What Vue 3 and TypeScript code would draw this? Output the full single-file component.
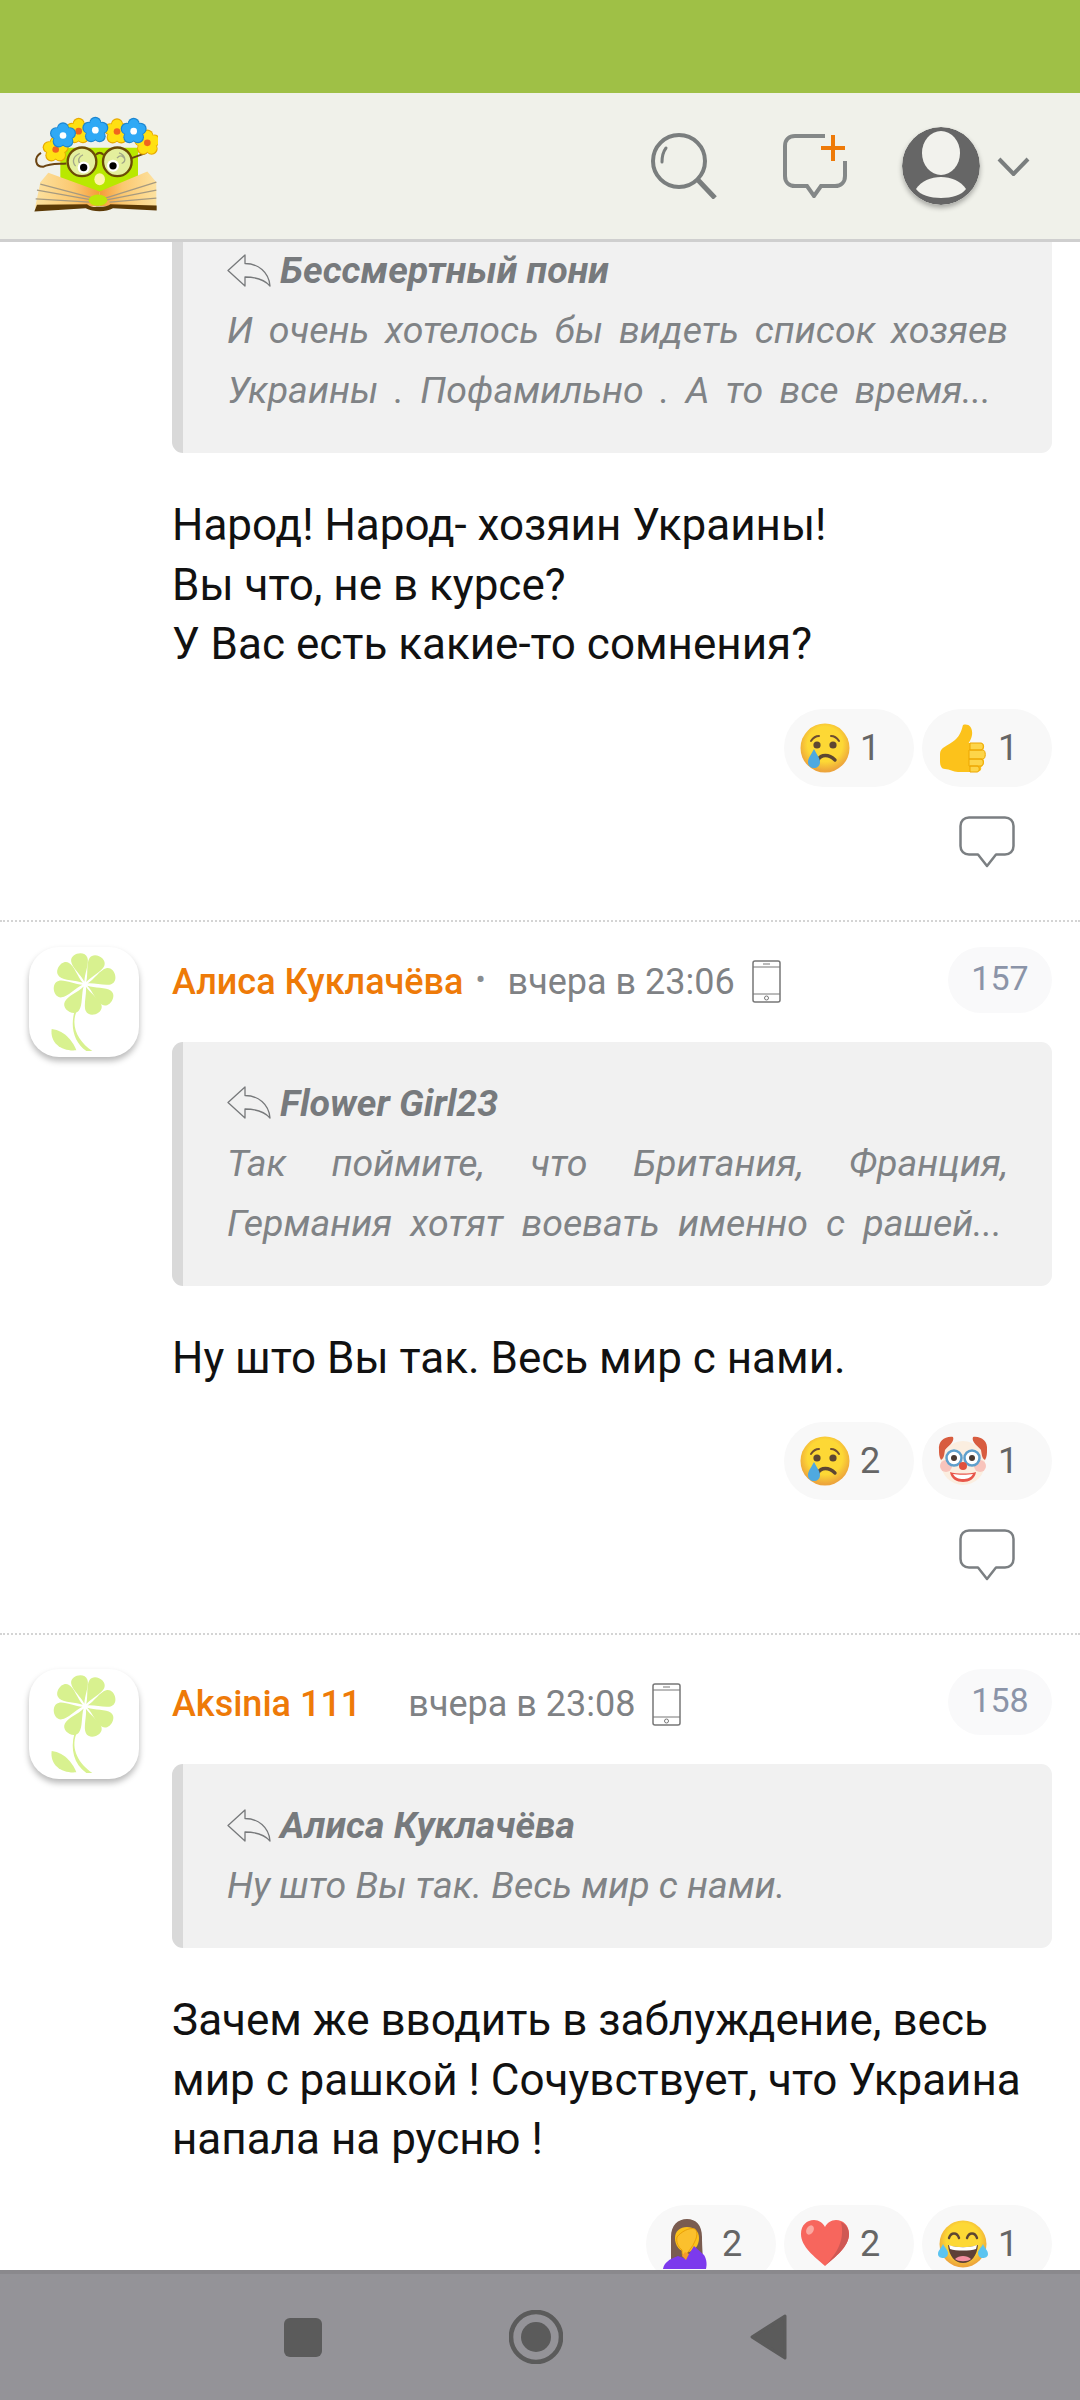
<script setup lang="ts">
interface Line { text: string; width: number }
interface Reaction { icon: string; count: number }
interface Comment {
  id: number
  name?: string
  time?: string
  dot?: boolean
  num?: number
  quoteAuthor: string
  quote: Line[]
  body: string[]
  reactions: Reaction[]
  showReply: boolean
  cls: string
}

const comments: Comment[] = [
  {
    id: 156,
    quoteAuthor: 'Бессмертный пони',
    quote: [
      { text: 'И очень хотелось бы видеть список хозяев', width: 781 },
      { text: 'Украины . Пофамильно . А то все время...', width: 764 },
    ],
    body: ['Народ! Народ- хозяин Украины!', 'Вы что, не в курсе?', 'У Вас есть какие-то сомнения?'],
    reactions: [{ icon: 'cry', count: 1 }, { icon: 'thumb', count: 1 }],
    showReply: true,
    cls: 'first',
  },
  {
    id: 157,
    name: 'Алиса Куклачёва',
    time: 'вчера в 23:06',
    dot: true,
    num: 157,
    quoteAuthor: 'Flower Girl23',
    quote: [
      { text: 'Так поймите, что Британия, Франция,', width: 781 },
      { text: 'Германия хотят воевать именно с рашей...', width: 775 },
    ],
    body: ['Ну што Вы так. Весь мир с нами.'],
    reactions: [{ icon: 'cry', count: 2 }, { icon: 'clown', count: 1 }],
    showReply: true,
    cls: 'second',
  },
  {
    id: 158,
    name: 'Aksinia 111',
    time: 'вчера в 23:08',
    dot: false,
    num: 158,
    quoteAuthor: 'Алиса Куклачёва',
    quote: [{ text: 'Ну што Вы так. Весь мир с нами.', width: 0 }],
    body: ['Зачем же вводить в заблуждение, весь', 'мир с рашкой ! Сочувствует, что Украина', 'напала на русню !'],
    reactions: [{ icon: 'palm', count: 2 }, { icon: 'heart', count: 2 }, { icon: 'joy', count: 1 }],
    showReply: false,
    cls: 'third',
  },
]

const petals = [-13, 28, 71, 122, 160, 211, 259, 305]
const flowers = [
  { x: 168, y: 170, c: '#ffe012', d: '#e8a900', m: '#f0641e' },
  { x: 443, y: 150, c: '#ffe012', d: '#e8a900', m: '#f0641e' },
  { x: 237, y: 115, c: '#ffe012', d: '#e8a900', m: '#f0641e' },
  { x: 352, y: 116, c: '#ffe012', d: '#e8a900', m: '#f0641e' },
  { x: 190, y: 128, c: '#2fa9f5', d: '#1b86d0', m: '#ffffff' },
  { x: 287, y: 112, c: '#2fa9f5', d: '#1b86d0', m: '#ffffff' },
  { x: 402, y: 115, c: '#2fa9f5', d: '#1b86d0', m: '#ffffff' },
]
const flowerPetals = [
  { x: 0, y: -22 },
  { x: 21, y: -7 },
  { x: 13, y: 18 },
  { x: -13, y: 18 },
  { x: -21, y: -7 },
]
</script>

<template>
  <div class="phone">
    <div class="status"></div>
    <header class="top">
      <svg class="logo" viewBox="100 70 375 290">
        <polygon points="182,165 415,165 415,258 300,298 182,258" fill="#b9e800" />
        <path d="M200 212C170 214 150 212 130 222C108 222 100 195 124 180" fill="none" stroke="#6a4310" stroke-width="6" />
        <path d="M396 196L440 180" stroke="#6a4310" stroke-width="6" />
        <g v-for="f in flowers" :key="f.x" :transform="`translate(${f.x} ${f.y})`">
          <circle v-for="p in flowerPetals" :key="p.x + '-' + p.y" :cx="p.x" :cy="p.y" r="18" :fill="f.d" />
          <circle v-for="p in flowerPetals" :key="'i' + p.x + '-' + p.y" :cx="p.x * 0.92" :cy="p.y * 0.92" r="16" :fill="f.c" />
          <circle r="10" :fill="f.m" />
        </g>
        <circle cx="247" cy="207" r="43" fill="#e4ef9d" stroke="#6b4a07" stroke-width="7" />
        <circle cx="353" cy="207" r="43" fill="#e4ef9d" stroke="#6b4a07" stroke-width="7" />
        <path d="M288 186Q300 174 312 186" fill="none" stroke="#6b4a07" stroke-width="6" />
        <path d="M228 220C215 205 222 190 240 182M242 214C232 204 238 190 250 186M352 196C362 184 372 190 376 200M366 212C382 206 376 186 358 180" fill="none" stroke="#a3a78a" stroke-width="4" />
        <circle cx="252" cy="224" r="18" fill="#fff" />
        <circle cx="252" cy="224" r="11" fill="#000" />
        <circle cx="340" cy="219" r="18" fill="#fff" />
        <circle cx="340" cy="219" r="11" fill="#000" />
        <ellipse cx="300" cy="259" rx="16" ry="18" fill="#fff3a8" />
        <defs>
          <linearGradient id="pgL" x1="0" x2="1" y1="0" y2="0">
            <stop offset="0" stop-color="#fde2a0" />
            <stop offset="0.6" stop-color="#fbc870" />
            <stop offset="1" stop-color="#f59a3a" />
          </linearGradient>
          <linearGradient id="pgR" x1="1" x2="0" y1="0" y2="0">
            <stop offset="0" stop-color="#fde2a0" />
            <stop offset="0.6" stop-color="#fbc870" />
            <stop offset="1" stop-color="#f59a3a" />
          </linearGradient>
        </defs>
        <polygon points="122,268 146,240 300,296 300,340 106,346" fill="url(#pgL)" />
        <polygon points="470,268 443,236 300,296 300,340 470,346" fill="url(#pgR)" />
        <path d="M122 274L290 318M112 292L280 322M108 318L270 328M470 268L310 318M470 292L318 322M470 316L330 328" stroke="#a69a80" stroke-width="4" fill="none" />
        <ellipse cx="295" cy="322" rx="28" ry="17" fill="#bde60a" />
        <path d="M112 336L262 334C275 344 285 342 295 342C310 342 320 342 332 334L471 338V353L340 346C320 358 280 358 258 346L104 356Z" fill="#5c3a06" />
      </svg>
      <div class="spacer"></div>
      <svg class="i-search" viewBox="0 0 66 66">
        <circle cx="28" cy="28" r="26" fill="none" stroke="#7a7e7e" stroke-width="4" />
        <path d="M47 47L64 65" stroke="#7a7e7e" stroke-width="5" />
        <path d="M11 29C11 23 12 19 15 15" fill="none" stroke="#7a7e7e" stroke-width="3" stroke-linecap="round" />
      </svg>
      <svg class="i-chat" viewBox="0 0 64 64">
        <path d="M42 2H12C6 2 2 6 2 12V42C2 48 6 52 12 52H24L31 62L38 52H52C58 52 62 48 62 42V27" fill="none" stroke="#848888" stroke-width="4" />
        <path d="M50 1V27M38 14H62" stroke="#ee7a08" stroke-width="4" />
      </svg>
      <svg class="i-user" viewBox="0 0 78 78">
        <circle cx="39" cy="39" r="39" fill="#666" />
        <ellipse cx="39" cy="26" rx="19" ry="22" fill="#f2f2ed" />
        <path d="M14 62C24 46 54 46 64 62C56 74 22 74 14 62Z" fill="#f2f2ed" />
      </svg>
      <svg class="i-chev" viewBox="0 0 33 19">
        <path d="M2 2L16.5 17L31 2" fill="none" stroke="#7a7e7e" stroke-width="4" />
      </svg>
    </header>

    <main class="feed">
      <article v-for="c in comments" :key="c.id" class="comment" :class="c.cls">
        <div class="avatar-col">
          <div v-if="c.name" class="avatar">
            <svg viewBox="0 0 330 330">
              <path d="M142 195C124 240 150 285 190 312H172C134 285 124 240 136 195Z" fill="#d8f18f" />
              <path d="M68 246C110 250 135 290 142 310C100 314 62 290 68 246Z" fill="#d8f18f" />
              <path
                v-for="a in petals"
                :key="a"
                d="M0 -8C-5 -30 -27 -58 -25 -76C-23 -101 23 -101 25 -76C27 -58 5 -30 0 -8Z"
                fill="#d8f18f"
                :transform="`translate(168 112) rotate(${a})`"
              />
            </svg>
          </div>
        </div>
        <div class="main-col">
          <div v-if="c.name" class="meta">
            <span class="name">{{ c.name }}</span>
            <span v-if="c.dot" class="dot">•</span>
            <span class="time" :class="{ far: !c.dot }">{{ c.time }}</span>
            <svg class="i-phone" viewBox="0 0 29 43">
              <rect x="1" y="1" width="27" height="41" rx="2" fill="none" stroke="#777" stroke-width="1.5" />
              <path d="M1 7H28M1 34H28M11 4H18" stroke="#777" stroke-width="1" fill="none" />
              <circle cx="14.5" cy="38" r="2" fill="none" stroke="#777" stroke-width="1" />
            </svg>
            <span class="num">{{ c.num }}</span>
          </div>
          <blockquote class="quote">
            <div class="q-author">
              <svg class="i-reply" viewBox="0 0 44 33">
                <path d="M1 16.5L18 1V9.5C31 9.5 42 18 43 32C37 25 29 23 18 23V32Z" fill="none" stroke="#77797b" stroke-width="1.3" stroke-linejoin="round" />
              </svg>
              <span>{{ c.quoteAuthor }}</span>
            </div>
            <div
              v-for="l in c.quote"
              :key="l.text"
              class="q-line"
              :class="{ just: l.width > 0 }"
              :style="l.width > 0 ? { width: l.width + 'px' } : {}"
            >{{ l.text }}</div>
          </blockquote>
          <div class="body">
            <div v-for="b in c.body" :key="b">{{ b }}</div>
          </div>
          <div class="reactions">
            <div v-for="r in c.reactions" :key="r.icon" class="pill">
              <svg class="emoji" viewBox="0 0 50 50">
                <template v-if="r.icon === 'cry'">
                  <defs>
                    <radialGradient id="face" cx="50%" cy="42%" r="55%">
                      <stop offset="0.65" stop-color="#fdd835" />
                      <stop offset="1" stop-color="#eda53c" />
                    </radialGradient>
                  </defs>
                  <circle cx="25" cy="25" r="24.5" fill="url(#face)" />
                  <path d="M11 18C13 15 16 13 19 13M39 18C37 15 34 13 31 13" fill="none" stroke="#6d4c30" stroke-width="2" stroke-linecap="round" />
                  <circle cx="17" cy="22" r="3.6" fill="#5d4632" />
                  <circle cx="33" cy="22" r="3.6" fill="#5d4632" />
                  <path d="M18 37C21 31 29 31 35 37" fill="none" stroke="#5d4632" stroke-width="3.4" stroke-linecap="round" />
                  <path d="M14 26C11 32 8 35 8 39C8 43 11 45 14 45C17 45 20 43 20 39C20 35 17 32 14 26Z" fill="#4fa9e0" />
                </template>
                <template v-else-if="r.icon === 'thumb'">
                  <path d="M2 31C2 24 10 23 17 17C23 12 24 5 25 2C31 0 35 5 34 12C33 18 30 20 31 20H43C47 20 47 26 44 27C48 28 48 35 45 36C47 38 46 43 43 44C44 47 42 49 38 49H20C15 49 12 46 7 46C3 46 2 42 2 38Z" fill="#fcc21b" />
                  <path d="M32 20H43C46 20 46 27 43 27H32ZM31 27H45C48 27 48 36 45 36H31ZM31 36H43C46 36 46 43 43 43H31ZM32 43H39C42 43 42 49 39 49H32Z" fill="#fdd54a" stroke="#eda600" stroke-width="1" />
                </template>
                <template v-else-if="r.icon === 'clown'">
                  <circle cx="25" cy="27" r="22" fill="#fbeee0" />
                  <path d="M1 14C0 5 7 0 15 1C17 6 10 10 7 14C6 20 6 22 3 24C1 21 1 17 1 14ZM49 14C50 5 43 0 35 1C33 6 40 10 43 14C44 20 44 22 47 24C49 21 49 17 49 14Z" fill="#d85c3f" />
                  <circle cx="8" cy="30" r="6" fill="#f8c4bc" />
                  <circle cx="42" cy="30" r="6" fill="#f8c4bc" />
                  <circle cx="16" cy="22" r="7.5" fill="#fff" stroke="#5e9fcc" stroke-width="2.5" />
                  <circle cx="34" cy="22" r="7.5" fill="#fff" stroke="#5e9fcc" stroke-width="2.5" />
                  <circle cx="16" cy="22" r="3" fill="#4a3a32" />
                  <circle cx="34" cy="22" r="3" fill="#4a3a32" />
                  <circle cx="25" cy="30" r="4" fill="#e0513c" />
                  <path d="M12 36C18 38 32 38 38 36C37 43 31 46 25 46C19 46 13 43 12 36Z" fill="#e8564a" />
                  <path d="M15 38C20 39 30 39 35 38C33 42 29 43 25 43C21 43 17 42 15 38Z" fill="#fff" />
                </template>
                <template v-else-if="r.icon === 'heart'">
                  <path d="M25 47C15 38 1 28 1 15C1 6 7 1 14 1C19 1 23 4 25 8C27 4 31 1 36 1C43 1 49 6 49 15C49 28 35 38 25 47Z" fill="#f7665d" />
                  <path d="M41 3C46 5 49 10 49 15C49 28 35 38 25 47C33 38 46 24 41 3Z" fill="#cf5854" />
                  <ellipse cx="10" cy="11" rx="3.5" ry="5" fill="#fba8a0" transform="rotate(30 10 11)" />
                </template>
                <template v-else-if="r.icon === 'joy'">
                  <defs>
                    <radialGradient id="faceJ" cx="50%" cy="42%" r="55%">
                      <stop offset="0.65" stop-color="#fdd835" />
                      <stop offset="1" stop-color="#eda53c" />
                    </radialGradient>
                  </defs>
                  <circle cx="25" cy="25" r="23.5" fill="url(#faceJ)" />
                  <path d="M11 19C13 13 19 13 21 19M29 19C31 13 37 13 39 19" fill="none" stroke="#5d4632" stroke-width="2.4" stroke-linecap="round" />
                  <path d="M10 26C18 29 32 29 40 26C39 37 33 44 25 44C17 44 11 37 10 26Z" fill="#5d4037" />
                  <path d="M11 26C18 29 32 29 39 26L38 30C32 32 18 32 12 30Z" fill="#fff" />
                  <path d="M17 40C21 36 29 36 33 40C30 43 20 43 17 40Z" fill="#f48fa0" />
                  <path d="M5 25C3 30 0 31 0 35C0 38 3 39 5 39C8 39 10 37 10 34C10 31 7 29 5 25ZM45 25C47 30 50 31 50 35C50 38 47 39 45 39C42 39 40 37 40 34C40 31 43 29 45 25Z" fill="#5cc4f0" />
                </template>
                <template v-else-if="r.icon === 'palm'">
                  <path d="M9 40C9 36 9 22 9 18C9 6 16 0 25 0C34 0 40 6 40 18C40 28 41 38 41 42C33 44 16 44 9 40Z" fill="#7a5c50" />
                  <path d="M13 19C13 12 18 8 25 8C32 8 37 12 37 19C37 27 32 33 25 33C18 33 13 27 13 19Z" fill="#fcc21b" />
                  <path d="M15 18C19 13 27 8 33 10C36 13 35 18 33 22C31 28 26 32 23 38C20 38 20 34 20 31C16 28 14 23 15 18Z" fill="#fbc02d" stroke="#e59600" stroke-width="0.8" />
                  <path d="M1 50C2 44 7 40 16 37L24 40L32 27L42 36C45 41 45 46 44 50Z" fill="#7c3aed" />
                  <path d="M20 37L24 41L27 35L23 33Z" fill="#f59c2a" />
                </template>
              </svg>
              <span class="count">{{ r.count }}</span>
            </div>
          </div>
          <div v-if="c.showReply" class="reply">
            <svg viewBox="0 0 56 52">
              <path d="M10 1.5H46C51 1.5 54.5 5 54.5 10V30C54.5 35 51 38.5 46 38.5H37L28 50L19 38.5H10C5 38.5 1.5 35 1.5 30V10C1.5 5 5 1.5 10 1.5Z" fill="none" stroke="#7b7f82" stroke-width="2.5" stroke-linejoin="round" />
            </svg>
          </div>
        </div>
      </article>
    </main>

    <nav class="nav">
      <span class="n-square"></span>
      <svg class="n-circle" viewBox="0 0 54 54">
        <circle cx="27" cy="27" r="25" fill="none" stroke="#5b5b5b" stroke-width="4.6" />
        <circle cx="27" cy="27" r="15" fill="#5b5b5b" />
      </svg>
      <svg class="n-tri" viewBox="0 0 38 46">
        <path d="M2 23L35 2V44Z" fill="#5b5b5b" stroke="#5b5b5b" stroke-width="3" stroke-linejoin="round" />
      </svg>
    </nav>
  </div>
</template>

<style scoped>
.phone {
  width: 1080px;
  height: 2400px;
  display: flex;
  flex-direction: column;
  overflow: hidden;
  background: #fff;
  font-family: Roboto, "Liberation Sans", sans-serif;
}
.status {
  height: 93px;
  flex: none;
  background: #9fc046;
}
.top {
  height: 149px;
  flex: none;
  box-sizing: border-box;
  display: flex;
  align-items: center;
  background: #f0f1ea;
  border-bottom: 3px solid #cfcfcf;
  padding: 0 50px 0 33px;
}
.logo { width: 125px; height: 97px; flex: none; margin-top: -3px; }
.spacer { flex: 1; }
.i-search { width: 66px; height: 66px; flex: none; margin-top: -1px; }
.i-chat { width: 64px; height: 64px; flex: none; margin-left: 66px; }
.i-user {
  width: 78px;
  height: 78px;
  flex: none;
  margin-left: 55px;
  border-radius: 50%;
  box-shadow: 0 3px 5px rgba(0, 0, 0, 0.3);
}
.i-chev { width: 33px; height: 19px; flex: none; margin-left: 17px; }

.feed { flex: 1; min-height: 0; overflow: hidden; }
.comment {
  display: grid;
  grid-template-columns: 172px 1fr;
  padding-right: 28px;
  border-bottom: 2px dotted #d4d4d4;
}
.comment.first { padding-bottom: 52px; }
.comment.second { padding-top: 25px; padding-bottom: 52px; }
.comment.third { padding-top: 34px; border-bottom: none; }
.avatar-col { padding-left: 29px; }
.avatar {
  width: 110px;
  height: 110px;
  border-radius: 30px;
  background: #fff;
  box-shadow: 0 4px 6px rgba(0, 0, 0, 0.28);
}
.avatar svg { width: 110px; height: 110px; display: block; }
.main-col { min-width: 0; }
.meta {
  height: 66px;
  margin-bottom: 29px;
  display: flex;
  align-items: center;
  font-size: 36px;
  line-height: 66px;
}
.name { color: #ee7a08; font-weight: 500; margin-top: 4px; }
.dot { color: #8a8d90; margin-left: 12px; font-size: 30px; }
.time { color: #7f8285; margin-left: 22px; margin-top: 4px; }
.time.far { margin-left: 47px; }
.i-phone { width: 29px; height: 43px; margin-left: 17px; margin-top: 4px; flex: none; }
.num {
  margin-left: auto;
  width: 104px;
  height: 66px;
  box-sizing: border-box;
  text-align: center;
  border-radius: 33px;
  background: #f9f9fa;
  color: #8b94a8;
  font-size: 34px;
  line-height: 63px;
}
.quote {
  margin: 0;
  box-sizing: border-box;
  background: #f1f1f1;
  border-left: 11px solid #d9d9d9;
  border-radius: 11px;
  padding: 31px 44px 33px 44px;
  font-style: italic;
  font-size: 37.5px;
  line-height: 60px;
  color: #808386;
}
.first .quote {
  padding-top: 0;
  border-top-left-radius: 0;
  border-top-right-radius: 0;
}
.first .q-author { margin-top: -2px; }
.q-author {
  display: flex;
  align-items: center;
  gap: 9px;
  font-weight: 700;
  color: #777a7d;
}
.i-reply { width: 44px; height: 33px; flex: none; }
.q-line { white-space: nowrap; }
.q-line.just { white-space: normal; text-align: justify; text-align-last: justify; }
.body {
  margin-top: 43px;
  font-size: 44px;
  line-height: 59.5px;
  color: #111;
}
.reactions {
  margin-top: 34px;
  display: flex;
  justify-content: flex-end;
  gap: 8px;
}
.third .reactions { margin-top: 35px; }
.pill {
  width: 130px;
  height: 78px;
  box-sizing: border-box;
  border-radius: 39px;
  background: #f8f8f8;
  display: flex;
  align-items: center;
  padding-left: 16px;
  gap: 10px;
}
.emoji { width: 50px; height: 50px; flex: none; }
.count { font-size: 36px; color: #666; }
.reply {
  margin-top: 29px;
  height: 52px;
  display: flex;
  justify-content: flex-end;
  padding-right: 37px;
}
.reply svg { width: 56px; height: 52px; }

.nav {
  height: 130px;
  flex: none;
  box-sizing: border-box;
  background: #949398;
  border-top: 4px solid #8a898d;
  display: flex;
  align-items: center;
  padding-left: 284px;
  gap: 187px;
}
.n-square {
  width: 38px;
  height: 39px;
  flex: none;
  border-radius: 6px;
  background: #5b5b5b;
}
.n-circle { width: 54px; height: 54px; flex: none; }
.n-tri { width: 38px; height: 46px; flex: none; }
</style>
